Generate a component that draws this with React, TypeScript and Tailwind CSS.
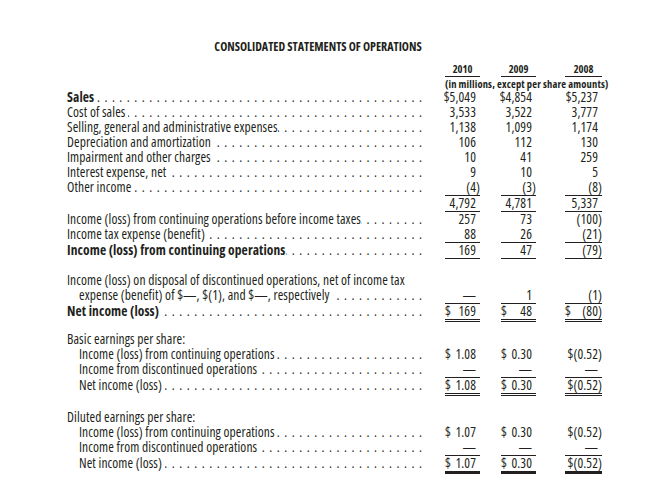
import React, { useLayoutEffect, useRef, useState } from "react";

type V = string | { d: string };
type Line = "s" | "d" | "t" | undefined;
type Row =
  | { kind: "spacer"; cls: string }
  | {
      kind: "row";
      label?: string;
      bold?: boolean;
      indent?: boolean;
      dots?: boolean;
      vals?: [V, V, V];
      line?: Line;
    };

const rows: Row[] = [
  { kind: "row", label: "Sales", bold: true, dots: true, vals: ["$5,049", "$4,854", "$5,237"] },
  { kind: "row", label: "Cost of sales ", dots: true, vals: ["3,533", "3,522", "3,777"] },
  { kind: "row", label: "Selling, general and administrative expenses", dots: true, vals: ["1,138", "1,099", "1,174"] },
  { kind: "row", label: "Depreciation and amortization ", dots: true, vals: ["106", "112", "130"] },
  { kind: "row", label: "Impairment and other charges ", dots: true, vals: ["10", "41", "259"] },
  { kind: "row", label: "Interest expense, net ", dots: true, vals: ["9", "10", "5"] },
  { kind: "row", label: "Other income", dots: true, vals: ["(4)", "(3)", "(8)"], line: "s" },
  { kind: "row", vals: ["4,792", "4,781", "5,337"], line: "s" },
  { kind: "row", label: "Income (loss) from continuing operations before income taxes", dots: true, vals: ["257", "73", "(100)"] },
  { kind: "row", label: "Income tax expense (benefit)", dots: true, vals: ["88", "26", "(21)"], line: "s" },
  { kind: "row", label: "Income (loss) from continuing operations", bold: true, dots: true, vals: ["169", "47", "(79)"], line: "s" },
  { kind: "spacer", cls: "h-[14px]" },
  { kind: "row", label: "Income (loss) on disposal of discontinued operations, net of income tax" },
  { kind: "row", label: "expense (benefit) of $—, $(1), and $—, respectively ", indent: true, dots: true, vals: ["—", "1", "(1)"], line: "s" },
  { kind: "row", label: "Net income (loss)", bold: true, dots: true, vals: [{ d: "169" }, { d: "48" }, { d: "(80)" }], line: "d" },
  { kind: "spacer", cls: "h-[10px]" },
  { kind: "row", label: "Basic earnings per share:" },
  { kind: "row", label: "Income (loss) from continuing operations", indent: true, dots: true, vals: [{ d: "1.08" }, { d: "0.30" }, "$(0.52)"] },
  { kind: "row", label: "Income from discontinued operations", indent: true, dots: true, vals: ["—", "—", "—"], line: "s" },
  { kind: "row", label: "Net income (loss) ", indent: true, dots: true, vals: [{ d: "1.08" }, { d: "0.30" }, "$(0.52)"], line: "d" },
  { kind: "spacer", cls: "h-[14px]" },
  { kind: "row", label: "Diluted earnings per share:" },
  { kind: "row", label: "Income (loss) from continuing operations", indent: true, dots: true, vals: [{ d: "1.07" }, { d: "0.30" }, "$(0.52)"] },
  { kind: "row", label: "Income from discontinued operations", indent: true, dots: true, vals: ["—", "—", "—"], line: "s" },
  { kind: "row", label: "Net income (loss) ", indent: true, dots: true, vals: [{ d: "1.07" }, { d: "0.30" }, "$(0.52)"], line: "t" },
];

const colCls = ["ml-[22px] w-[35px]", "ml-[21px] w-[35px]", "ml-[29px] w-[37px]"];

function lineCls(l: Line) {
  if (l === "s") return "border-b border-[#231f20]";
  if (l === "d") return "border-b-[3px] border-double border-[#231f20]";
  if (l === "t") return "border-b-[3px] border-solid border-[#231f20]";
  return "";
}

function Num({ v }: { v: string }) {
  const hang = !v.endsWith(")");
  return (
    <span className="whitespace-nowrap">
      {v}
      {hang && <span className="invisible">)</span>}
    </span>
  );
}

function Cell({ v, i, line }: { v?: V; i: number; line: Line }) {
  return (
    <div className={`${colCls[i]} ${lineCls(line)}`}>
      {v === undefined ? (
        <div className="h-[15px]" />
      ) : typeof v === "string" ? (
        <div className="flex h-[15px] justify-end">
          <Num v={v} />
        </div>
      ) : (
        <div className="flex h-[15px] justify-between">
          <span>$</span>
          <Num v={v.d} />
        </div>
      )}
    </div>
  );
}

function Leader() {
  const box = useRef<HTMLSpanElement>(null);
  const probe = useRef<HTMLSpanElement>(null);
  const [n, setN] = useState(-1);
  useLayoutEffect(() => {
    if (!box.current || !probe.current) return;
    const w = box.current.getBoundingClientRect().width - 2;
    const pitch = probe.current.getBoundingClientRect().width / 10;
    setN(Math.max(0, Math.floor((w + 3) / pitch) + 1));
  }, []);
  return (
    <span ref={box} className="relative flex min-w-0 flex-1 justify-end overflow-hidden pl-[2px] tracking-[1px] whitespace-pre">
      {n < 0 ? (
        <span ref={probe} className="invisible absolute left-0 top-0">
          {". ".repeat(10)}
        </span>
      ) : (
        <span>{n > 0 ? ". ".repeat(n).trimEnd() : ""}</span>
      )}
    </span>
  );
}

export default function App() {
  return (
    <div className="w-[652px] h-[498px] bg-white text-[#231f20] font-['Open_Sans',sans-serif] overflow-hidden">
      <div className="pt-[39px] pl-[67px]">
        <div className="flex w-[502px] justify-center text-[12px] leading-[15px] font-bold [font-stretch:75%]">
          CONSOLIDATED STATEMENTS OF OPERATIONS
        </div>
        <div className="mt-[9px] flex text-[10.5px] font-bold leading-[12px] [font-stretch:75%]">
          <div className="w-[356px]" />
          {["2010", "2009", "2008"].map((y, i) => (
            <div key={y} className={`${colCls[i]} border-b border-[#231f20] pb-[1px] text-center`}>
              {y}
            </div>
          ))}
        </div>
        <div className="mt-[1px] flex text-[10.5px] font-bold leading-[12px] [font-stretch:75%]">
          <div className="w-[378px]" />
          <div className="whitespace-nowrap tracking-[0.15px]">(in millions, except per share amounts)</div>
        </div>
        <div className="text-[13.5px] leading-[15px] tracking-[0.1px] [font-stretch:75%]">
          {rows.map((r, idx) =>
            r.kind === "spacer" ? (
              <div key={idx} className={r.cls} />
            ) : (
              <div key={idx} className="flex items-start">
                <div className={`flex h-[15px] w-[356px] whitespace-nowrap ${r.indent ? "pl-[12px]" : ""}`}>
                  {r.label && (
                    <span className={`shrink-0 whitespace-pre ${r.bold ? "font-bold" : ""}`}>{r.label}</span>
                  )}
                  {r.dots && <Leader />}
                </div>
                {[0, 1, 2].map((i) => (
                  <Cell key={i} i={i} v={r.vals ? r.vals[i] : undefined} line={r.vals ? r.line : undefined} />
                ))}
              </div>
            )
          )}
        </div>
      </div>
    </div>
  );
}
